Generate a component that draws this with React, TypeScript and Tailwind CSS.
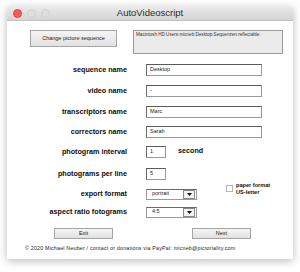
import React from 'react';

const font = { fontFamily: '"Liberation Sans", Arial, sans-serif' };

const Label: React.FC<{ children: React.ReactNode }> = ({ children }) => (
    <div className="w-[120px] shrink-0 text-right text-[7.2px] font-bold leading-none text-[#0c0c0c]">{children}</div>
);

const TextField: React.FC<{ value: string; w?: string }> = ({ value, w = 'w-[116px]' }) => (
    <div className={`${w} h-[12px] bg-white border border-[#9a9a9a] border-t-[#5a5a5a] border-l-[#6a6a6a] flex items-center pl-[3px] text-[5.5px] text-[#222] leading-none`}>
        {value}
    </div>
);

const Select: React.FC<{ value: string }> = ({ value }) => (
    <div className="w-[51px] h-[11px] bg-white border border-[#9a9a9a] border-t-[#6a6a6a] flex items-center">
        <div className="flex-1 pl-[5px] text-[5.5px] text-[#222] leading-none">{value}</div>
        <div className="w-[12px] h-[9px] mr-[1px] border border-[#8a8a8a] bg-[#f2f2f2] flex items-center justify-center">
            <svg width="5" height="3" viewBox="0 0 5 3">
                <path d="M0 0 L5 0 L2.5 3 Z" fill="#111" />
            </svg>
        </div>
    </div>
);

const Button: React.FC<{ children: React.ReactNode; className: string }> = ({ children, className }) => (
    <div className={`${className} bg-gradient-to-b from-[#f4f4f4] to-[#e2e2e2] border border-[#a5a5a5] flex items-center justify-center text-[5.5px] text-[#222] leading-none`}>
        {children}
    </div>
);

export default function App() {
    return (
        <div className="w-[300px] h-[272px] bg-white pt-[6px] pl-[7px]" style={font}>
            <div className="w-[286px] h-[253px] bg-white rounded-t-[4px] shadow-[0_2px_9px_rgba(0,0,0,0.28)] flex flex-col overflow-hidden">

                {/* Title bar */}
                <div className="relative h-[15px] shrink-0 bg-gradient-to-b from-[#ebebeb] to-[#d5d5d5] border-b border-[#c2c2c2] flex items-center justify-center">
                    <div className="absolute left-[6px] top-[3px] flex gap-[5px]">
                        <div className="w-[9px] h-[9px] rounded-full bg-[#fc5a52] border border-[#e0443e]" />
                        <div className="w-[9px] h-[9px] rounded-full bg-[#dedede] border border-[#d0d0d0]" />
                        <div className="w-[9px] h-[9px] rounded-full bg-[#dedede] border border-[#d0d0d0]" />
                    </div>
                    <span className="text-[9.5px] text-[#2a2a2a] leading-none">AutoVideoscript</span>
                </div>

                {/* Content */}
                <div className="flex flex-col pt-[9px]">
                    <div className="flex items-start h-[24px]">
                        <Button className="ml-[23px] w-[87px] h-[17px]">Change picture sequence</Button>
                        <div className="ml-[16px] w-[150px] h-[24px] bg-[#ebebeb] border border-[#9a9a9a] pl-[2px] pt-[2px] text-[4.6px] text-[#333] leading-none">
                            Macintosh HD:Users:micneb:Desktop:Sequenzen:reflectable:
                        </div>
                    </div>

                    <div className="flex items-center gap-[19px] mt-[10px] h-[12px]">
                        <Label>sequence name</Label>
                        <TextField value="Desktop" />
                    </div>
                    <div className="flex items-center gap-[19px] mt-[9px] h-[12px]">
                        <Label>video name</Label>
                        <TextField value="-" />
                    </div>
                    <div className="flex items-center gap-[19px] mt-[9px] h-[12px]">
                        <Label>transcriptors name</Label>
                        <TextField value="Marc" />
                    </div>
                    <div className="flex items-center gap-[19px] mt-[8px] h-[12px]">
                        <Label>correctors name</Label>
                        <TextField value="Sarah" />
                    </div>
                    <div className="flex items-center gap-[19px] mt-[8px] h-[12px]">
                        <Label>photogram interval</Label>
                        <TextField value="1" w="w-[20px]" />
                        <span className="-ml-[7px] text-[7.2px] font-bold leading-none text-[#0c0c0c] mb-[2px]">second</span>
                    </div>
                    <div className="flex items-center gap-[19px] mt-[10px] h-[12px]">
                        <Label>photograms per line</Label>
                        <TextField value="5" w="w-[20px]" />
                    </div>
                    <div className="flex items-center gap-[19px] mt-[8px] h-[12px]">
                        <Label>export format</Label>
                        <Select value="portrait" />
                        <div className="ml-[10px] mb-[11px] flex items-center gap-[3px]">
                            <div className="w-[7px] h-[7px] bg-white border border-[#b5b5b5]" />
                            <div className="text-[5.6px] font-bold leading-[7px] text-[#111]">
                                paper format<br />US-letter
                            </div>
                        </div>
                    </div>
                    <div className="flex items-center gap-[19px] mt-[6px] h-[12px]">
                        <Label>aspect ratio fotograms</Label>
                        <Select value="4:5" />
                    </div>

                    <div className="flex mt-[10px]">
                        <Button className="ml-[47px] w-[59px] h-[11px]">Exit</Button>
                        <Button className="ml-[79px] w-[59px] h-[11px]">Next</Button>
                    </div>

                    <div className="mt-[5px] ml-[18px] text-[5.3px] leading-[8px] text-[#222] tracking-[0.2px]">
                        © 2020 Michael Neuber / contact or donations via PayPal: micneb@pictoriality.com
                    </div>
                </div>
            </div>
        </div>
    );
}
